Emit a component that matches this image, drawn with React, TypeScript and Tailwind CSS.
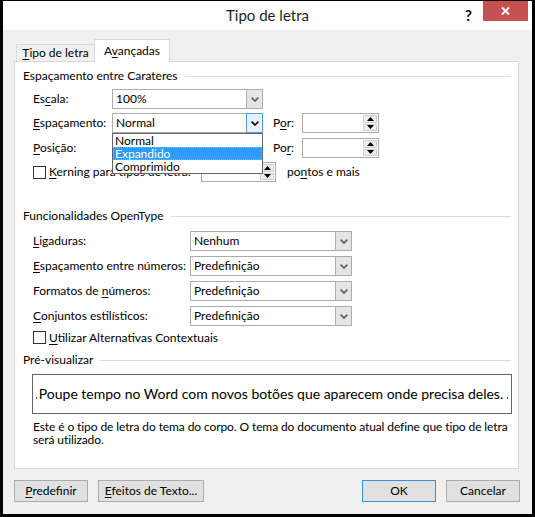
import React from "react"

const ui = "font-['Lato','Noto_Sans',sans-serif]"

function U({ c }: { c: string }) {
  return <span className="underline decoration-1 underline-offset-2">{c}</span>
}

function Chevron({ dark }: { dark?: boolean }) {
  return (
    <svg width="8" height="5" viewBox="0 0 8 5">
      <path d="M0.7 0.7 L4 4 L7.3 0.7" fill="none" stroke={dark ? "#000" : "#606060"} strokeWidth="1.7" />
    </svg>
  )
}

function Tri({ up }: { up?: boolean }) {
  return (
    <svg width="7" height="4" viewBox="0 0 7 4">
      <polygon points={up ? "0,4 3.5,0 7,4" : "0,0 3.5,4 7,0"} fill="#000" />
    </svg>
  )
}

function Combo({ value, w, focused }: { value: string; w: string; focused?: boolean }) {
  return (
    <div className={`${w} h-[20px] flex bg-white border border-[#acacac]`}>
      <div className="flex-1 pl-[3px] flex items-center text-[12px] leading-none">{value}</div>
      {focused ? (
        <div className="w-[17px] -my-px -mr-px bg-[#e5f1fb] border border-[#569de5] flex items-center justify-center">
          <Chevron dark />
        </div>
      ) : (
        <div className="w-[16px] bg-[#e5e5e5] border-l border-[#acacac] flex items-center justify-center">
          <Chevron />
        </div>
      )}
    </div>
  )
}

function Spin({ w }: { w: string }) {
  return (
    <div className={`${w} h-[20px] flex bg-white border border-[#acacac]`}>
      <div className="flex-1" />
      <div className="w-[16px] flex flex-col gap-px p-px">
        <div className="flex-1 bg-[#ececec] border border-[#d0d0d0] flex items-center justify-center">
          <Tri up />
        </div>
        <div className="flex-1 bg-[#ececec] border border-[#d0d0d0] flex items-center justify-center">
          <Tri />
        </div>
      </div>
    </div>
  )
}

function Check() {
  return <div className="w-[13px] h-[13px] border border-[#333] bg-white shrink-0" />
}

function Group({ title }: { title: string }) {
  return (
    <div className="h-[16px] flex items-center pl-[8px] pr-[7px] gap-[7px]">
      <span className="text-[12px] leading-none whitespace-nowrap">{title}</span>
      <div className="flex-1 h-px bg-[#dcdcdc]" />
    </div>
  )
}

function Button({ children, w, primary }: { children: React.ReactNode; w: string; primary?: boolean }) {
  return (
    <div
      className={`${w} h-[22px] flex items-center justify-center text-[12px] bg-[#e1e1e1] border ${
        primary ? "border-[#3c8ee0]" : "border-[#adadad]"
      }`}
    >
      {children}
    </div>
  )
}

export default function App() {
  const labelRow = "flex items-center h-[20px] pl-[18px] text-[12px]"

  return (
    <div
      className={`w-[535px] h-[517px] bg-[#f0f0f0] border-black border-t border-x-[3px] border-b-[3px] flex flex-col text-black ${ui}`}
    >
      {/* Title bar */}
      <div className="relative h-[29px] bg-white flex items-center justify-center">
        <span className="text-[15px] text-[#1e1e1e]">Tipo de letra</span>
        <span className="absolute left-[462px] top-[3px] text-[15px] font-bold">?</span>
        <div className="absolute right-[4px] top-0 w-[45px] h-[20px] bg-[#c75050] flex items-center justify-center">
          <svg width="9" height="8" viewBox="0 0 9 8">
            <path d="M1 0.5 L8 7.5 M8 0.5 L1 7.5" stroke="#fff" strokeWidth="2" />
          </svg>
        </div>
      </div>

      <div className="flex-1 flex flex-col pl-[11px] pr-[13px]">
        {/* Tabs */}
        <div className="mt-[9px] h-[22px] flex items-end pl-[2px] text-[12px]">
          <div className="w-[78px] h-[17px] border-l border-t border-[#d9d9d9] bg-[#f0f0f0] flex items-center justify-center">
            <span>
              <U c="T" />
              ipo de letra
            </span>
          </div>
          <div className="relative z-10 w-[76px] h-[23px] -mb-px border-x border-t border-[#d9d9d9] bg-white flex items-center justify-center">
            <span>
              A<U c="v" />
              ançadas
            </span>
          </div>
        </div>

        {/* Panel */}
        <div className="relative h-[408px] bg-white border border-[#d9d9d9] flex flex-col pt-[6px]">
          <Group title="Espaçamento entre Carateres" />

          <div className={`${labelRow} mt-[5px]`}>
            <span className="w-[79px]">
              Es<U c="c" />
              ala:
            </span>
            <Combo value="100%" w="w-[151px]" />
          </div>

          <div className={`${labelRow} mt-[4px]`}>
            <span className="w-[79px]">
              <U c="E" />
              spaçamento:
            </span>
            <Combo value="Normal" w="w-[151px]" focused />
            <span className="w-[29px] ml-[10px]">
              P<U c="o" />
              r:
            </span>
            <Spin w="w-[77px]" />
          </div>

          <div className={`${labelRow} mt-[5px]`}>
            <span className="w-[79px]">
              <U c="P" />
              osição:
            </span>
            <Combo value="" w="w-[151px]" />
            <span className="w-[29px] ml-[10px]">
              Po<U c="r" />:
            </span>
            <Spin w="w-[77px]" />
          </div>

          <div className={`${labelRow} mt-[4px]`}>
            <div className="w-[168px] flex items-center gap-[3px]">
              <Check />
              <span className="whitespace-nowrap">
                <U c="K" />
                erning para tipos de letra:
              </span>
            </div>
            <Spin w="w-[75px]" />
            <span className="ml-[11px]">
              po<U c="n" />
              tos e mais
            </span>
          </div>

          {/* Dropdown list */}
          <div className="absolute left-[97px] top-[71px] w-[151px] h-[41px] z-20 bg-white border border-[#646464] flex flex-col text-[12px] leading-[13px]">
            <div className="h-[13px] pl-[2px]">Normal</div>
            <div className="h-[13px] pl-[1px] bg-[#3399ff] text-white border border-dotted border-[#e8a050] leading-[11px]">
              Expandido
            </div>
            <div className="h-[13px] pl-[2px]">Comprimido</div>
          </div>

          <div className="mt-[26px]">
            <Group title="Funcionalidades OpenType" />
          </div>

          <div className={`${labelRow} mt-[7px]`}>
            <span className="w-[157px]">
              <U c="L" />
              igaduras:
            </span>
            <Combo value="Nenhum" w="w-[162px]" />
          </div>
          <div className={`${labelRow} mt-[5px]`}>
            <span className="w-[157px] whitespace-nowrap">
              <U c="E" />
              spaçamento entre números:
            </span>
            <Combo value="Predefinição" w="w-[162px]" />
          </div>
          <div className={`${labelRow} mt-[5px]`}>
            <span className="w-[157px]">
              Formatos de <U c="n" />
              úmeros:
            </span>
            <Combo value="Predefinição" w="w-[162px]" />
          </div>
          <div className={`${labelRow} mt-[5px]`}>
            <span className="w-[157px]">
              <U c="C" />
              onjuntos estilísticos:
            </span>
            <Combo value="Predefinição" w="w-[162px]" />
          </div>

          <div className="flex items-center h-[13px] mt-[5px] pl-[18px] gap-[3px] text-[12px]">
            <Check />
            <span>
              <U c="U" />
              tilizar Alternativas Contextuais
            </span>
          </div>

          <div className="mt-[8px]">
            <Group title="Pré-visualizar" />
          </div>

          <div className="mt-[6px] ml-[17px] w-[480px] h-[40px] border border-[#646464] flex items-center justify-center">
            <span className="text-[14px] leading-none whitespace-nowrap">
              <span className="inline-block w-px h-[2px] bg-[#555] mr-[2px]" />
              Poupe tempo no Word com novos botões que aparecem onde precisa deles.
              <span className="inline-block w-px h-[2px] bg-[#555] ml-[4px]" />
            </span>
          </div>

          <div className="mt-[6px] ml-[18px] text-[12px] leading-[13px] tracking-[-0.1px] whitespace-nowrap">
            Este é o tipo de letra do tema do corpo. O tema do documento atual define que tipo de letra
            <br />
            será utilizado.
          </div>
        </div>

        {/* Buttons */}
        <div className="mt-[11px] w-[506px] flex justify-between">
          <div className="flex gap-[10px]">
            <Button w="w-[74px]">
              <span>
                <U c="P" />
                redefinir
              </span>
            </Button>
            <Button w="w-[106px]">
              <span>
                <U c="E" />
                feitos de Texto...
              </span>
            </Button>
          </div>
          <div className="flex gap-[10px]">
            <Button w="w-[74px]" primary>
              OK
            </Button>
            <Button w="w-[74px]">Cancelar</Button>
          </div>
        </div>
      </div>
    </div>
  )
}
